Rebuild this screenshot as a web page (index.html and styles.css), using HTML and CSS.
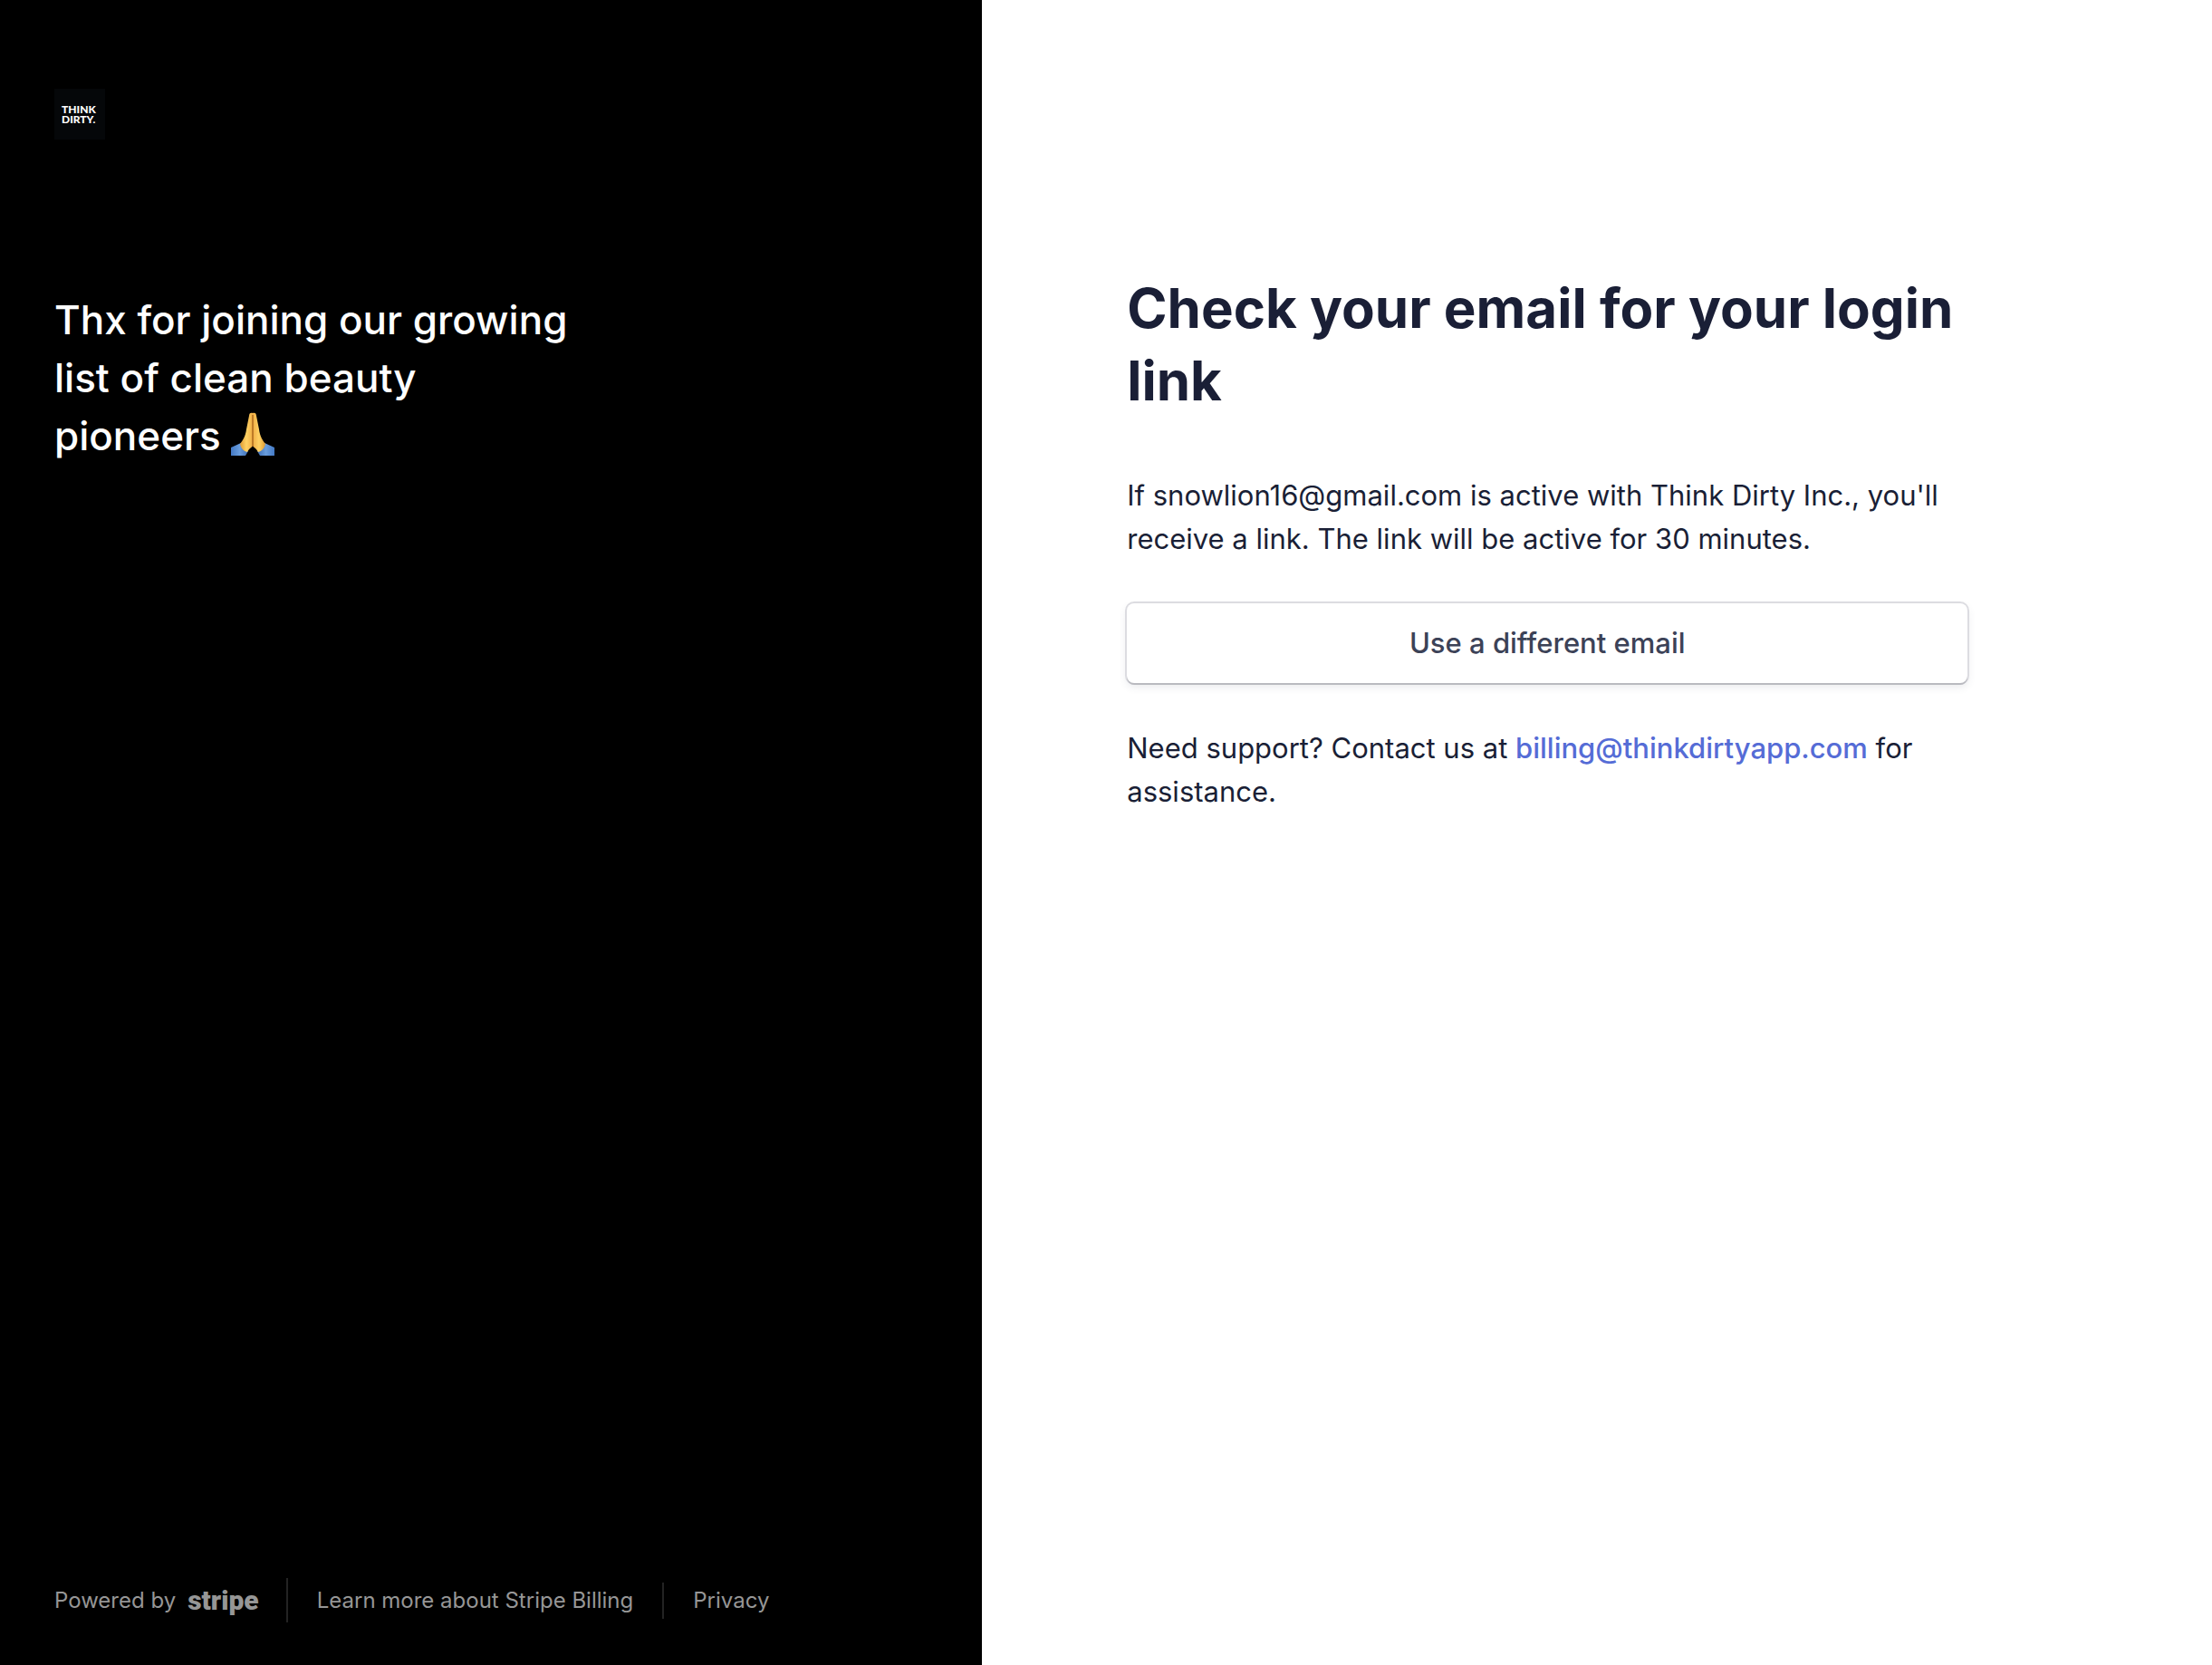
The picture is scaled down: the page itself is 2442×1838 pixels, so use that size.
FILE: index.html
```html
<!DOCTYPE html>
<html lang="en">
    <head>
        <title>Think Dirty Inc.</title>
        <meta charset="UTF-8">
        <meta name="viewport" content="width=device-width, initial-scale=1">
        <link rel="stylesheet" href="styles.css">
    </head>

    <body>

        <aside class="side">

            <svg class="logo" viewBox="0 0 56 56" role="img" aria-label="Think Dirty">
                <rect width="56" height="56" fill="#050709"/>
                <text x="8" y="27">THINK</text>
                <text x="8" y="38">DIRTY.</text>
            </svg>

            <p class="headline">
                Thx for joining our growing list of clean beauty pioneers
                <svg class="pray" viewBox="0 0 48 48" role="img" aria-label="folded hands">
                    <defs>
                        <linearGradient id="skin" x1="0" x2="1">
                            <stop offset="0" stop-color="#dd9a32"/>
                            <stop offset="0.5" stop-color="#ffd264"/>
                            <stop offset="1" stop-color="#f0ae45"/>
                        </linearGradient>
                        <linearGradient id="sleeve" x1="0" x2="1">
                            <stop offset="0" stop-color="#4379c5"/>
                            <stop offset="0.5" stop-color="#699ddd"/>
                            <stop offset="1" stop-color="#3c6cb3"/>
                        </linearGradient>
                    </defs>
                    <g id="hand">
                        <path fill="url(#sleeve)" d="M0 39 L11 34 L19 43 L16 48 L0 48 Z"/>
                        <path fill="url(#skin)" d="M24 1 C22 0 20 1 20 4 L17 19 C16 27 13 31 10 35 C11 40 14 43 18 44 C20 40 23 39 24 37 Z"/>
                    </g>
                    <use href="#hand" transform="translate(48 0) scale(-1 1)"/>
                    <path d="M24 3 L24 38" stroke="#a9651b" stroke-width="1.4"/>
                </svg>
            </p>

            <footer class="footer">
                <a class="powered" href="#">Powered by
                    <span class="stripe">stripe</span>
                </a>
                <nav class="links">
                    <a href="#">Learn more about Stripe Billing</a>
                    <a href="#">Privacy</a>
                </nav>
            </footer>

        </aside>

        <main class="main">
            <div class="content">
                <h1>Check your email for your login link</h1>
                <p>If snowlion16@gmail.com is active with Think Dirty Inc., you'll receive a link. The link will be active for 30 minutes.</p>
                <button type="button" class="button">Use a different email</button>
                <p>Need support? Contact us at <a class="mail" href="mailto:billing@thinkdirtyapp.com">billing@thinkdirtyapp.com</a> for assistance.</p>
            </div>
        </main>

    </body>
</html>
```

FILE: styles.css
```css
* {
    box-sizing: border-box;
}

body {
    margin: 0;
    min-height: 100vh;
    display: flex;
    font-family: Inter, sans-serif;
    font-size: 31px;
    line-height: 48px;
    color: #1a1f36;
    background: #fff;
}

p, h1 {
    margin: 0;
}

a {
    color: inherit;
    text-decoration: none;
}

/* left column */

.side {
    width: 44.4%;
    padding: 98px 60px 47px;
    display: flex;
    flex-direction: column;
    align-items: flex-start;
    background: #000;
    color: #fff;
}

.logo {
    width: 56px;
    height: 56px;
}

.logo text {
    font-family: Lato, sans-serif;
    font-size: 12px;
    font-weight: 900;
    fill: #fff;
}

.headline {
    max-width: 580px;
    margin-top: 167px;
    font-size: 44px;
    line-height: 64px;
    font-weight: 500;
}

.pray {
    width: 48px;
    height: 48px;
    vertical-align: -6px;
}

.footer {
    margin-top: auto;
    display: flex;
    align-items: center;
    font-size: 24px;
    line-height: 40px;
    color: #969696;
}

.powered {
    display: flex;
    align-items: center;
    gap: 13px;
    height: 49px;
    padding-right: 30px;
    border-right: 2px solid #232323;
}

.stripe {
    font-family: Roboto, sans-serif;
    font-size: 30px;
    font-weight: 900;
}

.links {
    display: flex;
}

.links a {
    padding: 0 32px;
}

.links a + a {
    border-left: 2px solid #232323;
}

/* right column */

.main {
    flex: 1;
    padding: 300px 160px 48px;
}

.content {
    max-width: 928px;
}

h1 {
    margin-bottom: 63px;
    font-size: 60px;
    line-height: 80px;
    font-weight: 700;
}

.button {
    display: block;
    width: 100%;
    height: 88px;
    margin: 47px 0 48px;
    border: 0;
    border-radius: 8px;
    background: #fff;
    box-shadow: 0 2px 0 #b9bac0, 0 0 0 2px #dcdce1, 0 4px 10px rgba(60, 66, 87, 0.12);
    font: inherit;
    font-weight: 500;
    color: #3c4257;
    cursor: pointer;
}

.mail {
    font-weight: 500;
    color: #556cd6;
}
```
